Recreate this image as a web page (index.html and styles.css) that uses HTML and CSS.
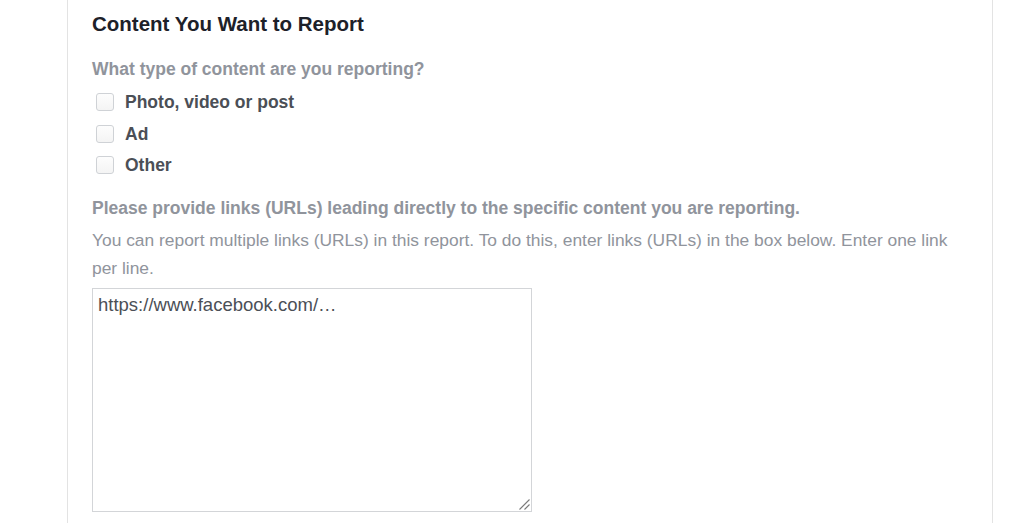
FILE: index.html
```html
<!DOCTYPE html>
<html>
<head>
<meta charset="utf-8">
<link rel="stylesheet" href="styles.css">
</head>
<body>
<div class="page">
  <div class="card">
    <h2 class="title">Content You Want to Report</h2>
    <div class="question">What type of content are you reporting?</div>
    <div class="options">
      <label class="option"><span class="box"></span><span>Photo, video or post</span></label>
      <label class="option"><span class="box"></span><span>Ad</span></label>
      <label class="option"><span class="box"></span><span>Other</span></label>
    </div>
    <div class="question q2">Please provide links (URLs) leading directly to the specific content you are reporting.</div>
    <p class="help">You can report multiple links (URLs) in this report. To do this, enter links (URLs) in the box below. Enter one link per line.</p>
    <div class="area">
      <span class="placeholder">https://www.facebook.com/…</span>
      <svg class="grip" width="12" height="12" viewBox="0 0 12 12"><path d="M11.5 1.5 L1.5 11.5 M11.5 6.5 L6.5 11.5" stroke="#7a7a7a" stroke-width="1.1" fill="none"/></svg>
    </div>
  </div>
</div>
</body>
</html>
```
FILE: styles.css
```css
html, body { margin: 0; padding: 0; background: #fff; }
body { font-family: "Liberation Sans", Arial, Helvetica, sans-serif; width: 1024px; height: 523px; overflow: hidden; }
.page { padding-left: 67px; }
.card {
  width: 926px;
  height: 523px;
  border-left: 1px solid #e3e3e3;
  border-right: 1px solid #e3e3e3;
  padding: 12px 24px 0 24px;
  box-sizing: border-box;
}
.title { margin: 0; font-size: 20.5px; font-weight: bold; color: #1d2129; line-height: 24px; }
.question { margin-top: 22px; font-size: 17.5px; font-weight: bold; color: #90949c; line-height: 22px; }
.options { margin-top: 11px; display: flex; flex-direction: column; gap: 9.5px; }
.option { display: flex; align-items: center; gap: 11px; font-size: 17.5px; font-weight: bold; color: #4b4f56; line-height: 22px; padding-left: 4px; }
.box { width: 18px; height: 18px; border: 1px solid #cfd2d6; border-radius: 3px; box-sizing: border-box; background: linear-gradient(#fdfdfd, #f4f4f4); }
.q2 { margin-top: 21px; }
.help { margin: 7px 0 0; font-size: 17.4px; color: #90949c; line-height: 28px; }
.area {
  position: relative;
  margin-top: 6px;
  width: 440px;
  height: 224px;
  border: 1px solid #d3d5d8;
  box-sizing: border-box;
  padding: 5px 5px;
  font-size: 18.5px;
  line-height: 22px;
  color: #4b4f56;
}
.grip { position: absolute; right: 1px; bottom: 1px; }
```
